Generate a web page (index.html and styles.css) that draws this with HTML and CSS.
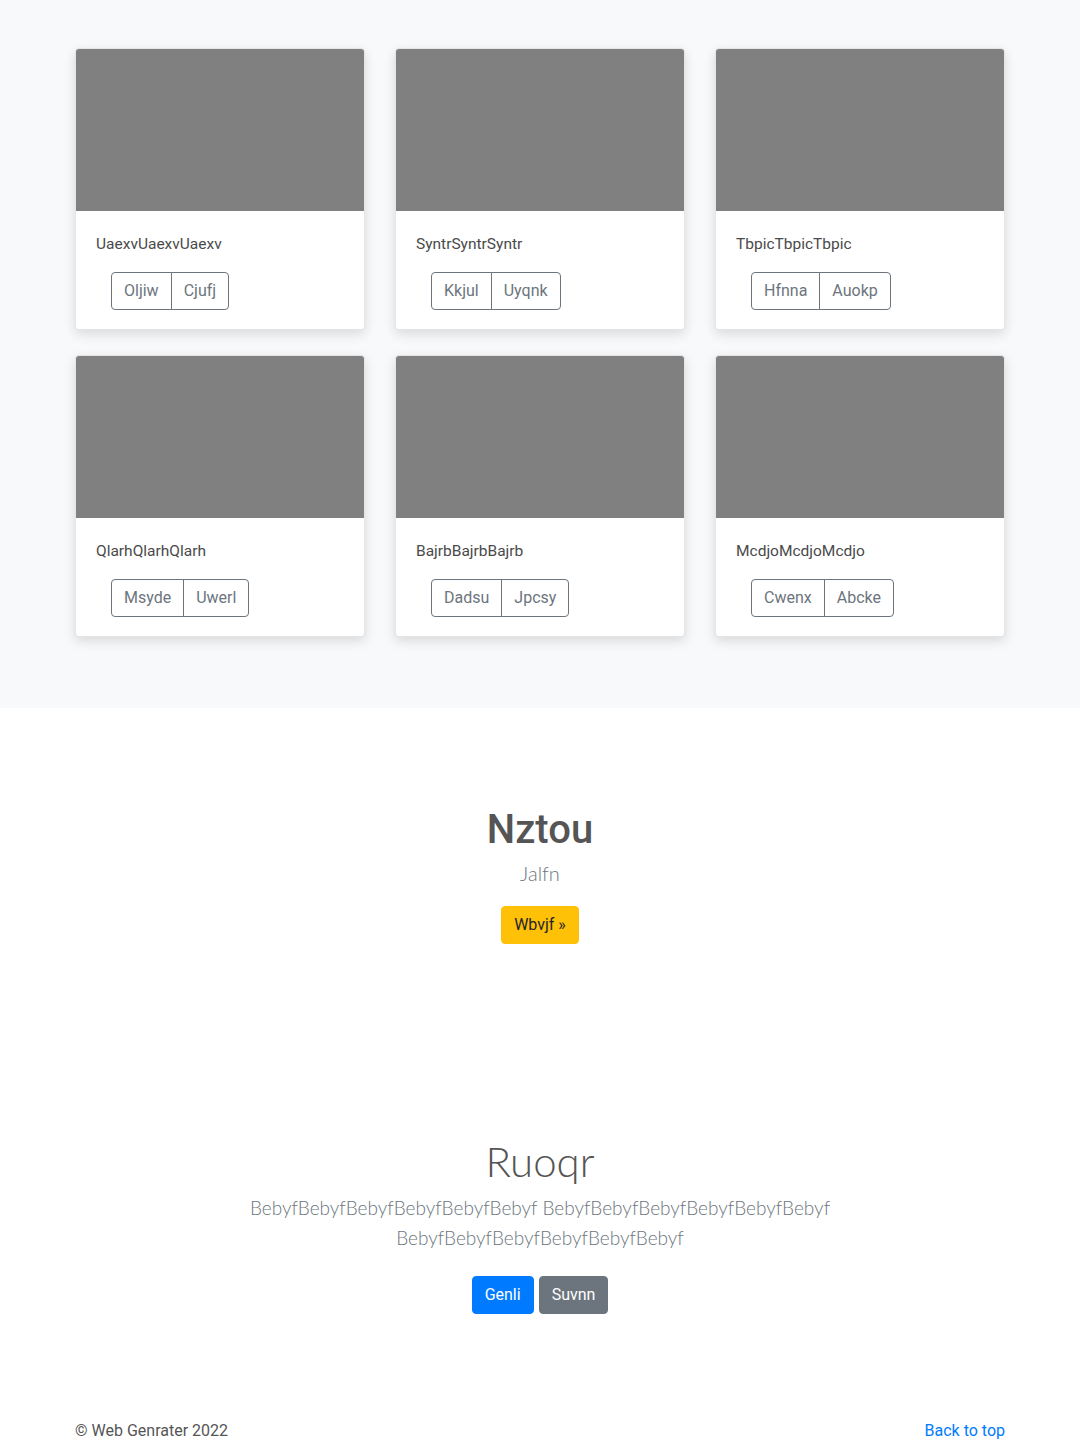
FILE: index.html
```html
<!DOCTYPE html>
<html lang="en">
<head>
<meta charset="utf-8">
<title>Album</title>
<link rel="stylesheet" href="styles.css">
</head>
<body>
<main>
  <section class="album">
    <div class="container">
      <div class="grid">
        <div class="card">
          <div class="card-img"></div>
          <div class="card-body">
            <p class="card-text">UaexvUaexvUaexv</p>
            <div class="btn-group"><a class="btn-o">Oljiw</a><a class="btn-o">Cjufj</a></div>
          </div>
        </div>
        <div class="card">
          <div class="card-img"></div>
          <div class="card-body">
            <p class="card-text">SyntrSyntrSyntr</p>
            <div class="btn-group"><a class="btn-o">Kkjul</a><a class="btn-o">Uyqnk</a></div>
          </div>
        </div>
        <div class="card">
          <div class="card-img"></div>
          <div class="card-body">
            <p class="card-text">TbpicTbpicTbpic</p>
            <div class="btn-group"><a class="btn-o">Hfnna</a><a class="btn-o">Auokp</a></div>
          </div>
        </div>
        <div class="card">
          <div class="card-img"></div>
          <div class="card-body">
            <p class="card-text">QlarhQlarhQlarh</p>
            <div class="btn-group"><a class="btn-o">Msyde</a><a class="btn-o">Uwerl</a></div>
          </div>
        </div>
        <div class="card">
          <div class="card-img"></div>
          <div class="card-body">
            <p class="card-text">BajrbBajrbBajrb</p>
            <div class="btn-group"><a class="btn-o">Dadsu</a><a class="btn-o">Jpcsy</a></div>
          </div>
        </div>
        <div class="card">
          <div class="card-img"></div>
          <div class="card-body">
            <p class="card-text">McdjoMcdjoMcdjo</p>
            <div class="btn-group"><a class="btn-o">Cwenx</a><a class="btn-o">Abcke</a></div>
          </div>
        </div>
      </div>
    </div>
  </section>

  <section class="hero">
    <h1 class="hero-title">Nztou</h1>
    <p class="hero-lead">Jalfn</p>
    <p class="hero-actions"><a class="btn btn-warning">Wbvjf »</a></p>
  </section>

  <section class="jumbo">
    <div class="jumbo-inner">
      <h1 class="jumbo-title">Ruoqr</h1>
      <p class="jumbo-lead">BebyfBebyfBebyfBebyfBebyfBebyf BebyfBebyfBebyfBebyfBebyfBebyf BebyfBebyfBebyfBebyfBebyfBebyf</p>
      <p class="jumbo-actions"><a class="btn btn-primary">Genli</a><a class="btn btn-secondary">Suvnn</a></p>
    </div>
  </section>
</main>

<footer class="footer">
  <div class="container footer-row">
    <p class="footer-copy">© Web Genrater 2022</p>
    <p class="footer-top"><a href="#">Back to top</a></p>
  </div>
</footer>
</body>
</html>
```

FILE: styles.css
```css
* { box-sizing: border-box; }

html, body {
  margin: 0;
  padding: 0;
}

body {
  font-family: Roboto, "Open Sans", "Liberation Sans", sans-serif;
  font-size: 16px;
  line-height: 1.5;
  color: #555;
  background: #fff;
}

p { margin: 0; }
h1 { margin: 0; }

.container {
  width: 960px;
  margin: 0 auto;
  padding: 0 15px;
}

.album {
  background: #f8f9fa;
  padding: 48px 0 71px;
}

.grid {
  display: grid;
  grid-template-columns: repeat(3, 290px);
  column-gap: 30px;
  row-gap: 25px;
}

.card {
  background: #fff;
  border: 1px solid rgba(0, 0, 0, 0.1);
  border-radius: 4px;
  box-shadow: 0 4px 12px rgba(0, 0, 0, 0.13);
  overflow: hidden;
}

.card-img {
  height: 162px;
  background: #808080;
}

.card-body {
  padding: 21px 20px 19px;
}

.card-text {
  color: #4a4a4a;
  margin-bottom: 16px;
  font-size: 15.5px;
  line-height: 24px;
}

.btn-group {
  display: inline-flex;
  margin-left: 15px;
}

.btn-o {
  display: inline-block;
  padding: 6px 12px;
  font-size: 16px;
  line-height: 24px;
  color: #6c757d;
  border: 1px solid #6c757d;
}

.btn-o:first-child {
  border-radius: 4px 0 0 4px;
}

.btn-o + .btn-o {
  margin-left: -1px;
  border-radius: 0 4px 4px 0;
}

.hero {
  text-align: center;
  padding: 98px 0 0;
  height: 429px;
}

.hero-title {
  font-size: 40px;
  line-height: 48px;
  font-weight: 500;
  color: #555;
  margin-bottom: 4px;
}

.hero-lead {
  font-family: Lato, Roboto, sans-serif;
  font-size: 20px;
  line-height: 30px;
  font-weight: 300;
  color: #6c757d;
  margin-bottom: 18px;
}

.btn {
  display: inline-block;
  padding: 6px 12px;
  font-size: 16px;
  line-height: 24px;
  border: 1px solid transparent;
  border-radius: 4px;
  text-decoration: none;
}

.btn-warning {
  background: #ffc107;
  border-color: #ffc107;
  color: #212529;
}

.btn-primary {
  background: #007bff;
  border-color: #007bff;
  color: #fff;
}

.btn-secondary {
  background: #6c757d;
  border-color: #6c757d;
  color: #fff;
  margin-left: 5px;
}

.jumbo {
  text-align: center;
  padding: 0 0 57px;
}

.jumbo-inner {
  width: 620px;
  margin: 0 auto;
}

.jumbo-title {
  font-family: Lato, Roboto, sans-serif;
  font-size: 42px;
  line-height: 48px;
  font-weight: 300;
  color: #555;
  margin-bottom: 8px;
}

.jumbo-lead {
  font-family: Lato, Roboto, sans-serif;
  font-size: 19px;
  line-height: 30px;
  font-weight: 300;
  color: #6c757d;
  margin-bottom: 23px;
}

.jumbo-actions {
  margin: 0;
  display: flex;
  justify-content: center;
}

.footer {
  padding: 48px 0;
  color: #555;
}

.footer-row {
  display: flex;
  justify-content: space-between;
}

.footer-top a {
  color: #007bff;
  text-decoration: none;
}
```
